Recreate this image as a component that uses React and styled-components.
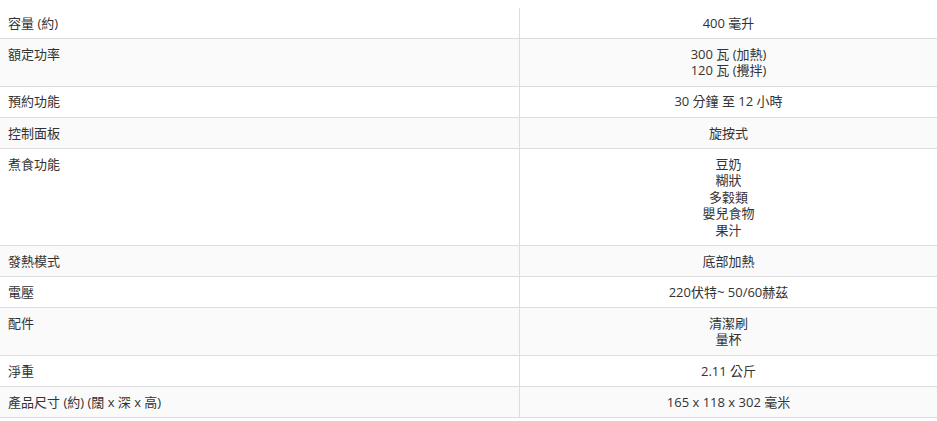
import React from 'react';
import styled, { createGlobalStyle } from 'styled-components';

const GlobalStyle = createGlobalStyle`
  body {
    margin: 0;
    background: #fff;
    font-family: "Open Sans", "Noto Sans CJK TC", sans-serif;
  }
`;

const Wrapper = styled.div`
  padding-top: 8px;
`;

const SpecTable = styled.table`
  width: 100%;
  border-collapse: collapse;
  font-size: 13px;
  line-height: 16.5px;
  color: #333;
`;

const Row = styled.tr`
  background-color: ${({ shaded }) => (shaded ? '#fafafa' : '#fff')};
  border-bottom: 1px solid #ddd;
`;

const Label = styled.td`
  width: 503px;
  padding: 6.8px 8px;
  text-align: left;
  vertical-align: top;
`;

const Value = styled.td`
  padding: 6.8px 8px;
  text-align: center;
  vertical-align: top;
  border-left: 1px solid #ddd;
`;

const Line = styled.div``;

const specs = [
  { label: '容量 (約)', values: ['400 毫升'] },
  { label: '額定功率', values: ['300 瓦 (加熱)', '120 瓦 (攪拌)'] },
  { label: '預約功能', values: ['30 分鐘 至 12 小時'] },
  { label: '控制面板', values: ['旋按式'] },
  { label: '煮食功能', values: ['豆奶', '糊狀', '多穀類', '嬰兒食物', '果汁'] },
  { label: '發熱模式', values: ['底部加熱'] },
  { label: '電壓', values: ['220伏特~ 50/60赫茲'] },
  { label: '配件', values: ['清潔刷', '量杯'] },
  { label: '淨重', values: ['2.11 公斤'] },
  { label: '產品尺寸 (約) (闊 x 深 x 高)', values: ['165 x 118 x 302 毫米'] },
];

const App = () => (
  <Wrapper>
    <GlobalStyle />
    <SpecTable>
      <tbody>
        {specs.map((spec, i) => (
          <Row key={spec.label} shaded={i % 2 === 1}>
            <Label>{spec.label}</Label>
            <Value>
              {spec.values.map((v) => (
                <Line key={v}>{v}</Line>
              ))}
            </Value>
          </Row>
        ))}
      </tbody>
    </SpecTable>
  </Wrapper>
);

export default App;
